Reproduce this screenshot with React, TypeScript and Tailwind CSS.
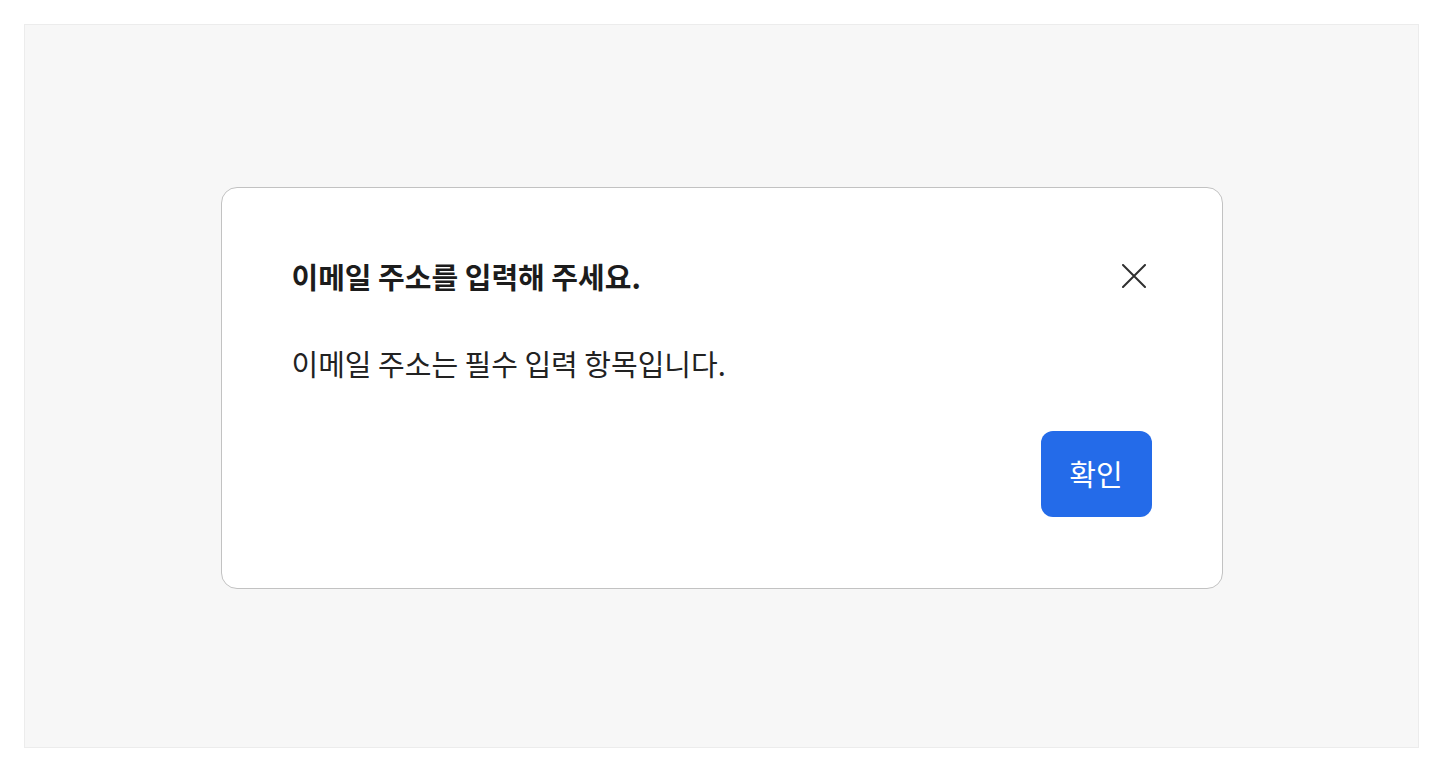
export default function App() {
  return (
    <div
      className="h-[772px] w-[1443px] bg-white p-6"
      style={{ fontFamily: '"Noto Sans CJK KR", "Noto Sans", sans-serif' }}
    >
      <div className="flex h-full w-full items-center justify-center border border-[#ececec] bg-[#f7f7f7]">
        <div className="mt-[4px] w-[1002px] rounded-2xl border border-[#c2c2c2] bg-white px-[70px] pt-[70px] pb-[71px]">
          <div className="flex h-9 items-center justify-between">
            <h2 className="text-[29px] font-bold leading-9 text-[#1c1c1c]">
              이메일 주소를 입력해 주세요.
            </h2>
            <button aria-label="close" className="mr-[6px] text-[#2f2f2f]">
              <svg width="24" height="24" viewBox="0 0 24 24" fill="none" stroke="currentColor" strokeWidth="2" strokeLinecap="round">
                <path d="M1 1 L23 23 M23 1 L1 23" />
              </svg>
            </button>
          </div>
          <p className="mt-[51px] text-[29px] leading-9 text-[#222]">
            이메일 주소는 필수 입력 항목입니다.
          </p>
          <div className="mt-[50px] flex justify-end">
            <button className="h-[86px] w-[111px] rounded-xl bg-[#246be9] text-[29px] text-white">
              확인
            </button>
          </div>
        </div>
      </div>
    </div>
  );
}
